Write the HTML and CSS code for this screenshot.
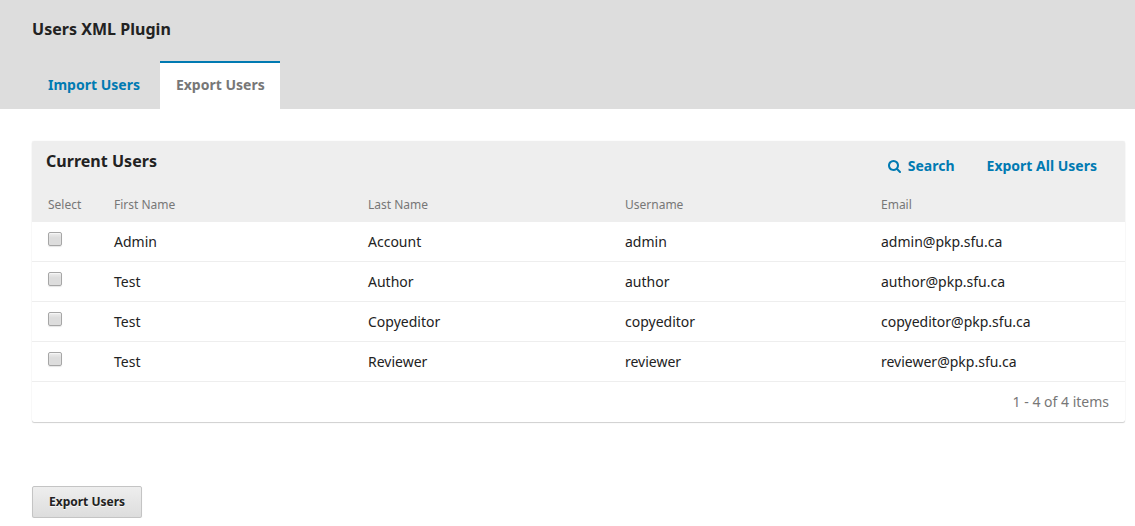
FILE: index.html
```html
<!DOCTYPE html>
<html lang="en">
<head>
<meta charset="utf-8">
<title>Users XML Plugin</title>
<link rel="stylesheet" href="styles.css">
</head>
<body>
<header class="page-header">
  <h1>Users XML Plugin</h1>
  <nav class="tabs">
    <a class="tab">Import Users</a>
    <a class="tab active">Export Users</a>
  </nav>
</header>
<main class="content">
  <section class="grid">
    <div class="grid-header">
      <h2>Current Users</h2>
      <div class="actions">
        <a class="action"><svg class="search-icon" viewBox="0 0 1664 1664"><path d="M1152 704q0-185-131.500-316.500T704 256 387.500 387.500 256 704t131.500 316.500T704 1152t316.500-131.500T1152 704zm512 832q0 52-38 90t-90 38q-54 0-90-38l-343-342q-179 124-399 124-143 0-273.500-55.500t-225-150-150-225T0 704t55.500-273.500 150-225 225-150T704 0t273.500 55.500 225 150 150 225T1408 704q0 220-124 399l343 343q37 37 37 90z"/></svg>Search</a>
        <a class="action">Export All Users</a>
      </div>
    </div>
    <div class="row labels"><span>Select</span><span>First Name</span><span>Last Name</span><span>Username</span><span>Email</span></div>
    <div class="row"><span><i class="check"></i></span><span>Admin</span><span>Account</span><span>admin</span><span>admin@pkp.sfu.ca</span></div>
    <div class="row"><span><i class="check"></i></span><span>Test</span><span>Author</span><span>author</span><span>author@pkp.sfu.ca</span></div>
    <div class="row"><span><i class="check"></i></span><span>Test</span><span>Copyeditor</span><span>copyeditor</span><span>copyeditor@pkp.sfu.ca</span></div>
    <div class="row"><span><i class="check"></i></span><span>Test</span><span>Reviewer</span><span>reviewer</span><span>reviewer@pkp.sfu.ca</span></div>
    <div class="paging">1 - 4 of 4 items</div>
  </section>
  <button class="export">Export Users</button>
</main>
</body>
</html>
```
FILE: styles.css
```css
* { box-sizing: border-box; }
body { margin: 0; background: #fff; color: #222; font: 14px/20px "Noto Sans", sans-serif; }
h1, h2 { margin: 0; font-size: 16px; line-height: 24px; font-weight: 700; letter-spacing: .03px; }
.page-header { height: 109px; padding: 17px 32px 0; background: #ddd; }
.tabs { display: flex; gap: 4px; margin-top: 20px; }
.tab { height: 48px; padding: 14px 16px 0; color: #007ab2; font-weight: 700; }
.tab.active { width: 120px; padding: 12px 0 0 16px; border-top: 2px solid #007ab2; background: #fff; color: #777; white-space: nowrap; }
.content { padding: 32px 10px 0 32px; }
.grid { border-radius: 2px; box-shadow: 0 0 1px rgba(0,0,0,.12), 0 1px 1px rgba(0,0,0,.18); }
.grid-header { display: flex; justify-content: space-between; height: 48px; padding: 8px 28px 0 14px; background: #eee; border-radius: 2px 2px 0 0; }
.actions { display: flex; gap: 32px; padding-top: 7px; }
.action { display: flex; height: 20px; color: #007ab2; font-weight: 700; }
.search-icon { width: 13px; height: 13px; margin: 4px 7px 0 0; fill: currentColor; }
.row { display: grid; grid-template-columns: 66px 254px 257px 256px 1fr; height: 40px; padding: 10px 0 0 16px; border-bottom: 1px solid #eee; }
.labels { height: 33px; padding-top: 6px; background: #eee; color: #777; font-size: 12px; }
.check { display: block; width: 14px; height: 14px; border: 1px solid #a6a6a6; border-radius: 2px; background: linear-gradient(#eee, #ddd 40%, #ddd); box-shadow: 0 1px 1px rgba(0,0,0,.1), inset 0 1px 1px rgba(255,255,255,.6); }
.paging { height: 40px; padding: 10px 16px 0; color: #777; text-align: right; }
.export { display: block; height: 32px; margin-top: 64px; padding: 0 16px 2px; border: 1px solid #c4c4c4; border-radius: 2px; background: linear-gradient(#eee, #ddd); color: #222; font: 700 12px "Noto Sans", sans-serif; text-shadow: 0 1px 0 rgba(255,255,255,.75); box-shadow: 0 1px 1px rgba(0,0,0,.1); }
```
